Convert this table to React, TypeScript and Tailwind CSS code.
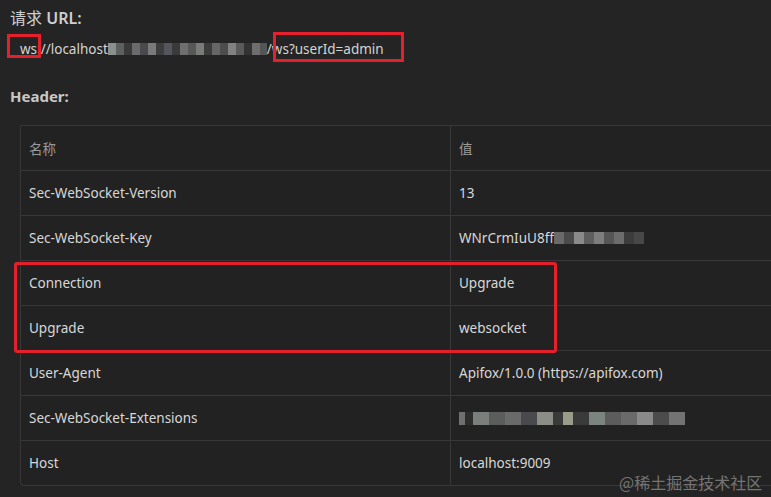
import React from "react";

const rows = [
  { name: "Sec-WebSocket-Version", value: "13" },
  { name: "Sec-WebSocket-Key", value: "WNrCrmIuU8ff", blur: "key" },
  { name: "Connection", value: "Upgrade" },
  { name: "Upgrade", value: "websocket" },
  { name: "User-Agent", value: "Apifox/1.0.0 (https://apifox.com)" },
  { name: "Sec-WebSocket-Extensions", value: "", blur: "ext" },
  { name: "Host", value: "localhost:9009" },
];

// pixelated blocks that hide parts of the screenshot
const urlBlocks = [
  "w-[8px] bg-[#8a908c]", "w-[8px] bg-[#5c605e]", "w-[8px] bg-[#3a3a3a]", "w-[8px] bg-[#6b6b6b]",
  "w-[8px] bg-[#4a4a4e]", "w-[8px] bg-[#7a7a7a]", "w-[8px] bg-[#3d3d3d]", "w-[8px] bg-[#55555e]",
  "w-[8px] bg-[#3a3a3a]", "w-[8px] bg-[#6f6f6f]", "w-[8px] bg-[#585858]", "w-[8px] bg-[#7a7c7a]",
  "w-[8px] bg-[#3c3c3c]", "w-[8px] bg-[#666]", "w-[8px] bg-[#4d4d4d]", "w-[8px] bg-[#828282]",
  "w-[8px] bg-[#5a5a5a]", "w-[8px] bg-[#333]", "w-[8px] bg-[#6e6e6e]", "w-[7px] bg-[#555]",
];

const keyBlocks = [
  "w-[10px] bg-[#6a6a6a]", "w-[10px] bg-[#4a4a4a]", "w-[10px] bg-[#8a8a8a]", "w-[10px] bg-[#5e5e5e]",
  "w-[10px] bg-[#7d7d7d]", "w-[10px] bg-[#555]", "w-[10px] bg-[#6c6c6c]", "w-[10px] bg-[#3c3c3c]",
  "w-[10px] bg-[#484848]",
];

const extBlocks = [
  "w-[6px] bg-[#707070]", "w-[8px] bg-[#2e2e2e]", "w-[16px] bg-[#7a7f7c]", "w-[16px] bg-[#5a5d5c]",
  "w-[16px] bg-[#6a6a6a]", "w-[16px] bg-[#4a4a4e]", "w-[16px] bg-[#8a8e86]", "w-[10px] bg-[#3a3a3a]",
  "w-[10px] bg-[#9a9c8a]", "w-[16px] bg-[#3a3a3a]", "w-[16px] bg-[#7b847f]", "w-[16px] bg-[#5c5c5c]",
  "w-[16px] bg-[#6a6a6a]", "w-[16px] bg-[#8a8a8a]", "w-[16px] bg-[#4c4c4c]", "w-[16px] bg-[#737373]",
];

function Mosaic({ blocks, h }: { blocks: string[]; h: string }) {
  return (
    <span className={`inline-flex align-middle ${h}`}>
      {blocks.map((b, i) => (
        <span key={i} className={`${b} h-full`} />
      ))}
    </span>
  );
}

export default function App() {
  return (
    <div
      className="relative w-[771px] h-[497px] overflow-hidden bg-[#242424] text-[#d4d4d4]"
      style={{ fontFamily: '"Noto Sans", "Noto Sans CJK SC", sans-serif' }}
    >
      <div className="pl-[10px] pt-[6px] text-[16px] leading-[22px] text-[#cfcfcf]">
        <span style={{ fontFamily: '"Noto Sans CJK SC", sans-serif' }}>请求</span>{" "}
        <span className="font-semibold">URL:</span>
      </div>

      <div className="relative mt-[9px] h-[22px] pl-[20px] text-[13.5px] leading-[22px] flex items-center">
        <span>ws://localhost</span>
        <Mosaic blocks={urlBlocks} h="h-[12px]" />
        <span>/ws?userId=admin</span>
        <div className="absolute left-[7px] top-[-4px] w-[34px] h-[24px] border-[3px] border-[#e3202b]" />
        <div className="absolute left-[273px] top-[-6px] w-[131px] h-[30px] border-[3px] border-[#e3202b]" />
      </div>

      <div className="pl-[10px] mt-[25px] text-[15px] leading-[22px] font-bold text-[#c8c8c8]">Header:</div>

      <div className="ml-[20px] mt-[18px] w-[900px] border border-[#383838] rounded-bl-[4px] bg-[#222222] text-[13.5px]">
        <div className="flex h-[44px] items-center text-[#9a9a9a]">
          <div className="w-[430px] pl-[8px] border-r border-[#383838] h-full flex items-center" style={{ fontFamily: '"Noto Sans CJK SC", sans-serif' }}>
            名称
          </div>
          <div className="pl-[8px] h-full flex items-center" style={{ fontFamily: '"Noto Sans CJK SC", sans-serif' }}>
            值
          </div>
        </div>
        {rows.map((r) => (
          <div key={r.name} className="flex h-[45px] border-t border-[#383838] text-[#d8d8d8]">
            <div className="w-[430px] pl-[8px] border-r border-[#383838] flex items-center">{r.name}</div>
            <div className="pl-[8px] flex items-center">
              {r.value}
              {r.blur === "key" && <Mosaic blocks={keyBlocks} h="h-[12px]" />}
              {r.blur === "ext" && <Mosaic blocks={extBlocks} h="h-[13px]" />}
            </div>
          </div>
        ))}
      </div>

      <div className="absolute left-[14px] top-[262px] w-[543px] h-[91px] border-[3px] border-[#e3202b] rounded-[3px]" />

      <div
        className="absolute left-[619px] top-[473px] text-[16px] leading-[18px] text-[#9a9a9a]/70"
        style={{ fontFamily: '"Noto Sans CJK SC", sans-serif' }}
      >
        @稀土掘金技术社区
      </div>
    </div>
  );
}
